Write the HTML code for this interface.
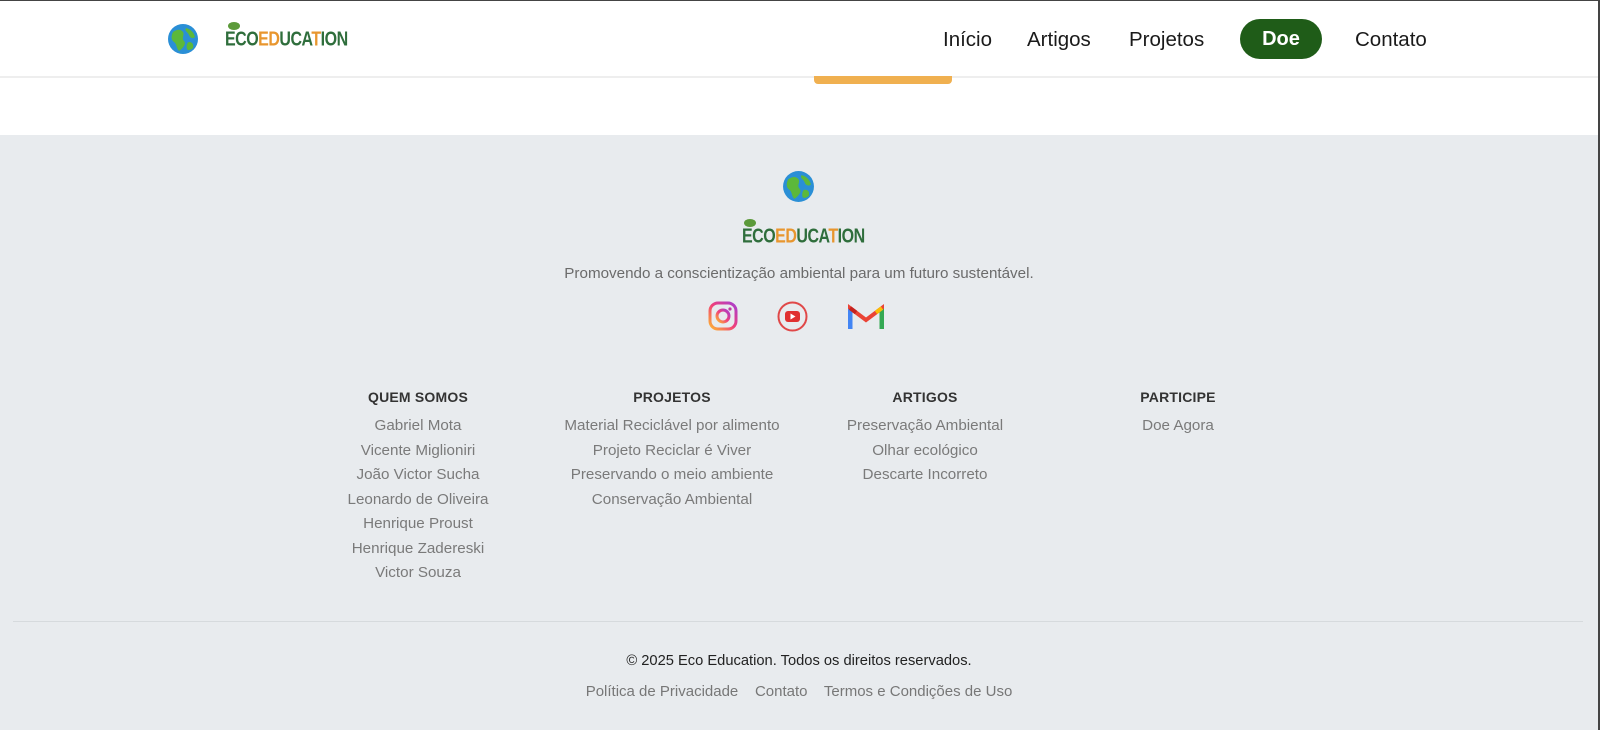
<!DOCTYPE html>
<html><head><meta charset="utf-8"><style>
*{margin:0;padding:0;box-sizing:border-box}
body{width:1600px;height:730px;overflow:hidden;background:#fff;font-family:"Liberation Sans",sans-serif;position:relative}
.a{position:absolute}
.c{position:absolute;transform:translateX(-50%);white-space:nowrap;text-align:center}
.nav{font-size:20.5px;color:#1a1a1a;top:28px}
.col{position:absolute;top:388px;width:300px;margin-left:-150px;text-align:center}
.col h4{font-size:14px;font-weight:bold;color:#333;height:28px;line-height:18px;letter-spacing:.2px}
.col div{font-size:15.2px;color:#7a7a7a;height:24.5px;line-height:20px}
.logo{font-weight:bold;letter-spacing:-0.5px;white-space:nowrap;transform:scaleY(1.25);transform-origin:left top}
</style></head><body>
<div class="a" style="left:0;top:0;width:1600px;height:1px;background:#444"></div>
<div class="a" style="right:0;top:0;width:2px;height:730px;background:#444"></div>
<div class="a" style="left:0;top:76px;width:1598px;height:2px;background:#eee"></div>
<div class="a" style="left:814px;top:76px;width:138px;height:8px;background:#f0b050;border-radius:0 0 4px 4px"></div>
<div class="a" style="left:0;top:135px;width:1598px;height:595px;background:#e8ebee"></div>

<svg class="a" style="left:167px;top:23px" width="32" height="32" viewBox="0 0 32 32"><circle cx="16" cy="16" r="15" fill="#2a8fd6"/><path d="M6 9c4-3 8-3 10 0s-2 6 1 9-2 8-5 10c-3-3-2-7-5-9s-3-6-1-10zM19 5c4 1 8 4 9 9-2 2-5 1-6-2s-5-4-3-7zM22 19c3 0 5 2 4 6-2 2-5 3-6 1s0-7 2-7z" fill="#5cb83a"/></svg>
<div class="a logo" style="left:225px;top:29px;font-size:16px"><span style="color:#2f6e3c">ECO</span><span style="color:#e8962e">ED</span><span style="color:#2f6e3c">UCA</span><span style="color:#e8962e">T</span><span style="color:#2f6e3c">ION</span></div>
<div class="a" style="left:228px;top:22px;width:12px;height:8px;background:#5c9a3a;border-radius:50%"></div>

<div class="a nav" style="left:943px">Início</div>
<div class="a nav" style="left:1027px">Artigos</div>
<div class="a nav" style="left:1129px">Projetos</div>
<div class="a" style="left:1240px;top:19px;width:82px;height:40px;border-radius:20px;background:#1f5c18;color:#fff;font-weight:bold;font-size:20px;text-align:center;line-height:40px">Doe</div>
<div class="a nav" style="left:1355px">Contato</div>

<svg class="a" style="left:782px;top:170px" width="33" height="33" viewBox="0 0 32 32"><circle cx="16" cy="16" r="15" fill="#2a8fd6"/><path d="M6 9c4-3 8-3 10 0s-2 6 1 9-2 8-5 10c-3-3-2-7-5-9s-3-6-1-10zM19 5c4 1 8 4 9 9-2 2-5 1-6-2s-5-4-3-7zM22 19c3 0 5 2 4 6-2 2-5 3-6 1s0-7 2-7z" fill="#5cb83a"/></svg>
<div class="a logo" style="left:742px;top:226px;font-size:16px"><span style="color:#2f6e3c">ECO</span><span style="color:#e8962e">ED</span><span style="color:#2f6e3c">UCA</span><span style="color:#e8962e">T</span><span style="color:#2f6e3c">ION</span></div>
<div class="a" style="left:744px;top:219px;width:12px;height:8px;background:#5c9a3a;border-radius:50%"></div>
<div class="c" style="left:799px;top:265px;font-size:15.2px;color:#6b6b6b">Promovendo a conscientização ambiental para um futuro sustentável.</div>

<svg class="a" style="left:708px;top:301px" width="30" height="30" viewBox="0 0 30 30"><defs><linearGradient id="ig" x1="0" y1="1" x2="1" y2="0"><stop offset="0" stop-color="#fdb632"/><stop offset=".5" stop-color="#f0407a"/><stop offset="1" stop-color="#a83dd0"/></linearGradient></defs><rect x="2" y="2" width="26" height="26" rx="8" fill="none" stroke="url(#ig)" stroke-width="3"/><circle cx="15" cy="15" r="6" fill="none" stroke="url(#ig)" stroke-width="3"/><circle cx="22" cy="8" r="1.6" fill="#c03aa0"/></svg>
<svg class="a" style="left:777px;top:301px" width="31" height="31" viewBox="0 0 31 31"><circle cx="15.5" cy="15.5" r="14" fill="none" stroke="#e04848" stroke-width="2"/><rect x="8" y="10" width="15" height="11" rx="3" fill="#e03030"/><path d="M13.5 12.5v6l5-3z" fill="#fff"/></svg>
<svg class="a" style="left:848px;top:303px" width="36" height="27" viewBox="0 0 36 27"><path d="M2 26V5l16 12L34 5v21" fill="none" stroke="#ea4335" stroke-width="4"/><path d="M2 26V6" stroke="#4285f4" stroke-width="5"/><path d="M34 26V6" stroke="#34a853" stroke-width="5"/><path d="M2 5l6 4.5" stroke="#c5221f" stroke-width="4"/><path d="M28 9.5l6-4.5" stroke="#fbbc04" stroke-width="4"/></svg>

<div class="col" style="left:418px"><h4>QUEM SOMOS</h4><div>Gabriel Mota</div><div>Vicente Miglioniri</div><div>João Victor Sucha</div><div>Leonardo de Oliveira</div><div>Henrique Proust</div><div>Henrique Zadereski</div><div>Victor Souza</div></div>
<div class="col" style="left:672px"><h4>PROJETOS</h4><div>Material Reciclável por alimento</div><div>Projeto Reciclar é Viver</div><div>Preservando o meio ambiente</div><div>Conservação Ambiental</div></div>
<div class="col" style="left:925px"><h4>ARTIGOS</h4><div>Preservação Ambiental</div><div>Olhar ecológico</div><div>Descarte Incorreto</div></div>
<div class="col" style="left:1178px"><h4>PARTICIPE</h4><div>Doe Agora</div></div>

<div class="a" style="left:13px;top:621px;width:1570px;height:1px;background:#d6dadd"></div>
<div class="c" style="left:799px;top:653px;font-size:14.7px;color:#222">© 2025 Eco Education. Todos os direitos reservados.</div>
<div class="c" style="left:799px;top:683px;font-size:15px;color:#777">Política de Privacidade &nbsp;&nbsp; Contato &nbsp;&nbsp; Termos e Condições de Uso</div>
</body></html>
